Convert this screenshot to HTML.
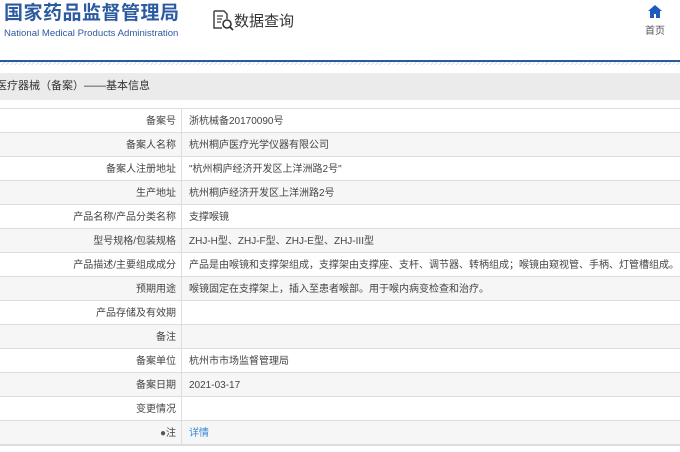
<!DOCTYPE html><html><head><meta charset="utf-8"><style>
body{margin:0;width:680px;height:452px;overflow:hidden;background:#fff;font-family:"Liberation Sans","Noto Sans CJK SC",sans-serif;position:relative}
.t{position:absolute;left:4px;top:2px;font-size:19px;line-height:24px;font-weight:bold;color:#2c5aa0;letter-spacing:0.5px;white-space:nowrap}
.e{position:absolute;left:4px;top:28px;font-size:9.6px;line-height:12px;color:#2c5aa0;white-space:nowrap}
.q{position:absolute;left:212px;top:9px;font-size:15px;color:#333}
.home{position:absolute;left:645px;top:5px;font-size:10px;color:#555;text-align:center}
.line{position:absolute;left:0;top:60px;width:680px;height:2px;background:#2a5a98}
.hatch{position:absolute;left:0;top:62px;width:680px;height:3px;background:repeating-linear-gradient(135deg,#cfe4f0 0 1px,#fff 1px 3px)}
.bar{position:absolute;left:0;top:73px;width:680px;height:27px;background:#ebebeb;font-size:11px;color:#333;line-height:27px;text-indent:-4px}
table{position:absolute;left:0;top:108px;width:720px;border-collapse:collapse;font-size:10px;color:#444;white-space:nowrap}
td{height:21px;line-height:21px;padding:2px 0 0;border-top:1px solid #ddd;vertical-align:middle}
tr:nth-child(even) td{background:#f6f6f6}
td.l{width:176px;text-align:right;padding-right:5px;border-right:1px solid #ddd}
td.v{padding-left:7px}
table{border-bottom:2px solid #ddd}
</style></head><body>
<div class="t">国家药品监督管理局</div>
<div class="e">National Medical Products Administration</div>
<div class="q"><svg width="22" height="22" viewBox="0 0 22 22" style="vertical-align:-5px"><path d="M2 2h10l3 3v5M2 2v17h8" fill="none" stroke="#444" stroke-width="1.5"/><path d="M5 7h6M5 10h5M5 13h4" stroke="#444" stroke-width="1.3"/><circle cx="15" cy="15" r="4" fill="none" stroke="#333" stroke-width="1.6"/><path d="M18 18l3 3" stroke="#333" stroke-width="1.8"/></svg>数据查询</div>
<div class="home"><svg width="14" height="13" viewBox="0 0 14 13" style="display:block;margin:0 auto 4px"><path d="M7 0L0 6h2v7h4V9h2v4h4V6h2z" fill="#1f5bbf"/></svg>首页</div>
<div class="line"></div><div class="hatch"></div>
<div class="bar">医疗器械（备案）——基本信息</div>
<table>
<tr><td class="l">备案号</td><td class="v">浙杭械备20170090号</td></tr>
<tr><td class="l">备案人名称</td><td class="v">杭州桐庐医疗光学仪器有限公司</td></tr>
<tr><td class="l">备案人注册地址</td><td class="v">"杭州桐庐经济开发区上洋洲路2号"</td></tr>
<tr><td class="l">生产地址</td><td class="v">杭州桐庐经济开发区上洋洲路2号</td></tr>
<tr><td class="l">产品名称/产品分类名称</td><td class="v">支撑喉镜</td></tr>
<tr><td class="l">型号规格/包装规格</td><td class="v">ZHJ-H型、ZHJ-F型、ZHJ-E型、ZHJ-III型</td></tr>
<tr><td class="l">产品描述/主要组成成分</td><td class="v">产品是由喉镜和支撑架组成，支撑架由支撑座、支杆、调节器、转柄组成；喉镜由窥视管、手柄、灯管槽组成。</td></tr>
<tr><td class="l">预期用途</td><td class="v">喉镜固定在支撑架上，插入至患者喉部。用于喉内病变检查和治疗。</td></tr>
<tr><td class="l">产品存储及有效期</td><td class="v"></td></tr>
<tr><td class="l">备注</td><td class="v"></td></tr>
<tr><td class="l">备案单位</td><td class="v">杭州市市场监督管理局</td></tr>
<tr><td class="l">备案日期</td><td class="v">2021-03-17</td></tr>
<tr><td class="l">变更情况</td><td class="v"></td></tr>
<tr><td class="l"><span style="color:#555">●</span>注</td><td class="v" style="color:#3a86d6">详情</td></tr>
</table>
</body></html>
